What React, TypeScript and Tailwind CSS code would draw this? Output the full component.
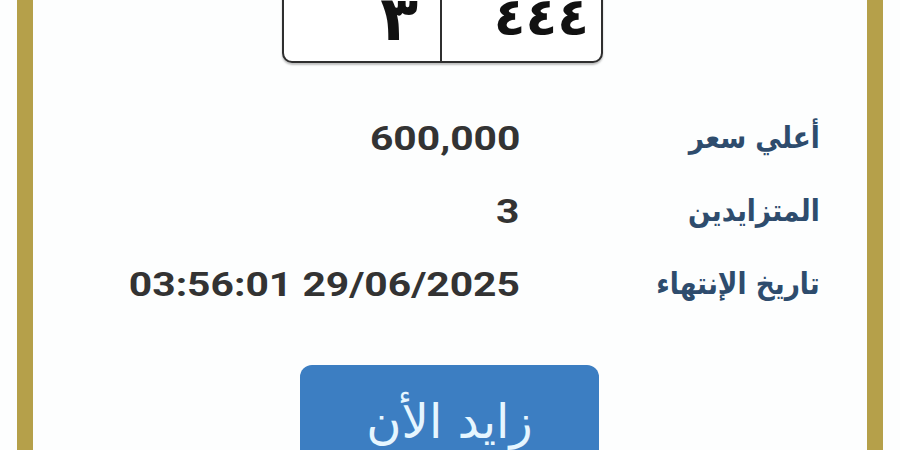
import React from "react";

const rows = [
  { label: "أعلي سعر", value: "600,000" },
  { label: "المتزايدين", value: "3" },
  { label: "تاريخ الإنتهاء", value: "03:56:01 29/06/2025" },
];

export default function App() {
  return (
    <div className="w-[900px] h-[450px] overflow-hidden bg-[#fdfefe]">
      <div className="ml-[17px] w-[866px] h-full border-x-[16px] border-[#b5a04a] flex flex-col items-stretch">
        {/* plate */}
        <div className="flex pl-[249px]">
          <div className="mt-[-30px] w-[321px] h-[93px] border-2 border-[#2f2f2f] rounded-b-[10px] flex bg-white shadow-[0_2px_2px_rgba(0,0,0,0.25)]">
            <div className="w-[158px] border-r-2 border-[#2f2f2f] flex justify-end pr-[22px] pt-[16px]">
              <span className="text-[62px] leading-none font-bold text-[#111]" style={{ fontFamily: '"DejaVu Sans", sans-serif' }}>٣</span>
            </div>
            <div className="flex-1 flex justify-end pr-[12px] pt-[19px]">
              <span className="text-[52px] leading-none font-bold text-[#111]" style={{ fontFamily: '"DejaVu Sans", sans-serif' }}>٤٤٤</span>
            </div>
          </div>
        </div>
        {/* rows */}
        <div className="mt-[39px] flex flex-col">
          {rows.map((r) => (
            <div key={r.label} className="flex h-[73px] items-center">
              <div className="w-[487px] text-right">
                <span
                  className="inline-block origin-right scale-x-[1.2] text-[34px] font-bold text-[#333] leading-none"
                  style={{ fontFamily: 'Roboto, "Liberation Sans", sans-serif' }}
                >
                  {r.value}
                </span>
              </div>
              <div className="w-[300px] text-right" dir="rtl">
                <span
                  className="inline-block origin-right scale-x-[0.88] text-[30px] font-bold text-[#2e4c6d] leading-none"
                  style={{ fontFamily: '"DejaVu Sans", sans-serif' }}
                >
                  {r.label}
                </span>
              </div>
            </div>
          ))}
        </div>
        {/* button */}
        <div className="mt-[44px] flex pl-[267px]">
          <div className="w-[299px] h-[110px] rounded-[12px] bg-[#3c7ec2] flex justify-center pt-[32px]">
            <span
              className="text-[48px] leading-none text-[#e6f6ff]"
              dir="rtl"
              style={{ fontFamily: '"DejaVu Sans", sans-serif' }}
            >
              زايد الأن
            </span>
          </div>
        </div>
      </div>
    </div>
  );
}
